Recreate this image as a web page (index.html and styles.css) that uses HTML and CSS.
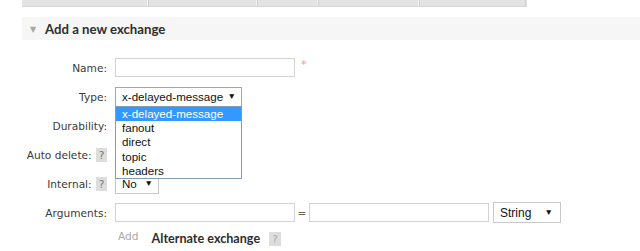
FILE: index.html
```html
<!DOCTYPE html>
<html lang="en">
<head>
  <meta charset="UTF-8" />
  <title>Add a new exchange</title>
  <link rel="stylesheet" href="styles.css">
</head>
<body>
  <div class="page">
    <div class="tabs">
      <div class="tab t1"></div>
      <div class="tab t2"></div>
      <div class="tab t3"></div>
      <div class="tab t4"></div>
      <div class="tab t5"></div>
    </div>

    <div class="section-head">
      <span class="arrow">&#9660;</span>
      <h2>Add a new exchange</h2>
    </div>

    <div class="form">
      <div class="row">
        <div class="label">Name:</div>
        <div class="input wide"></div>
        <span class="mandatory">*</span>
      </div>

      <div class="row">
        <div class="label">Type:</div>
        <div class="select type focus">
          <span>x-delayed-message</span><span class="caret">&#9660;</span>
          <ul class="options">
            <li class="selected">x-delayed-message</li>
            <li>fanout</li>
            <li>direct</li>
            <li>topic</li>
            <li>headers</li>
          </ul>
        </div>
      </div>

      <div class="row">
        <div class="label">Durability:</div>
      </div>

      <div class="row">
        <div class="label">Auto delete: <span class="help">?</span></div>
      </div>

      <div class="row">
        <div class="label">Internal: <span class="help">?</span></div>
        <div class="select small"><span>No</span><span class="caret">&#9660;</span></div>
      </div>

      <div class="row">
        <div class="label">Arguments:</div>
        <div class="input wide"></div>
        <span class="equals">=</span>
        <div class="input wide"></div>
        <div class="select kind"><span>String</span><span class="caret">&#9660;</span></div>
      </div>

      <div class="row last">
        <div class="label"></div>
        <span class="add">Add</span>
        <span class="alt">Alternate exchange</span>
        <span class="help big">?</span>
      </div>
    </div>
  </div>
</body>
</html>
```

FILE: styles.css
```css
* {
  box-sizing: border-box;
  margin: 0;
  padding: 0;
}

body {
  background: #fff;
  font-family: "DejaVu Sans", Verdana, sans-serif;
  font-size: 10.6px;
  color: #3a3a3a;
  overflow: hidden;
}

.tabs {
  display: flex;
  margin-left: 22px;
  width: 505px;
  height: 7px;
  background: #e3e3e3;
  border-bottom: 1px solid #d6d6d6;
}

.tab {
  height: 100%;
  border-right: 1px solid #f2f2f2;
  box-shadow: 1px 0 0 #d0d0d0;
}

.t1 { width: 126px; }
.t2 { width: 109px; }
.t3 { width: 61px; }
.t4 { width: 101px; }
.t5 { width: 107px; border-right: 1px solid #cfcfcf; box-shadow: none; }

.section-head {
  display: flex;
  align-items: center;
  margin: 10px 0 0 22px;
  height: 23px;
  background: #f6f6f6;
}

.arrow {
  font-size: 8px;
  color: #a8a8a8;
  margin: 1px 0 0 8px;
  width: 15px;
}

h2 {
  font-family: Lato, sans-serif;
  font-weight: bold;
  font-size: 13.2px;
  color: #2e2e2e;
}

.form {
  margin-top: 13px;
}

.row {
  display: flex;
  align-items: center;
  height: 29px;
}

.row.last {
  height: 22px;
}

.label {
  width: 108px;
  text-align: right;
  padding-right: 1px;
  margin-right: 7px;
  white-space: nowrap;
}

.help {
  display: inline-block;
  width: 11px;
  height: 14px;
  line-height: 14px;
  margin-left: 1px;
  background: #ddd;
  color: #777;
  text-align: center;
  font-size: 10.5px;
}

.help.big {
  width: 12px;
  margin-left: 9px;
  margin-top: 2px;
  color: #aaa;
}

.input {
  height: 19px;
  border: 1px solid #d3d3d3;
  background: #fff;
}

.input.wide {
  width: 180px;
}

.mandatory {
  color: #e99;
  font-size: 11px;
  margin: -6px 0 0 6px;
}

.equals {
  width: 14px;
  text-align: center;
  color: #666;
}

.select {
  position: relative;
  display: flex;
  align-items: center;
  justify-content: space-between;
  height: 20px;
  padding: 0 5px 0 6px;
  border: 1px solid #c8c8c8;
  background: #fff;
  font-family: "Liberation Sans", Arial, sans-serif;
  font-size: 11.6px;
  color: #111;
}

.select.focus {
  border-color: #8ea9d8;
}

.caret {
  font-size: 8.5px;
  color: #111;
  margin-top: -2px;
}

.select.type {
  width: 127px;
}

.select.small {
  width: 44px;
  padding-right: 5px;
}

.select.kind {
  width: 68px;
  height: 21px;
  margin-left: 4px;
  padding-right: 7px;
  font-size: 12px;
}

.options {
  position: absolute;
  left: -1px;
  top: 18px;
  width: 127px;
  list-style: none;
  background: #fff;
  border: 1px solid #7f9db9;
  z-index: 2;
}

.options li {
  height: 14.4px;
  line-height: 14.4px;
  padding-left: 6px;
}

.options li.selected {
  background: #3399ff;
  color: #fff;
}

.add {
  color: #aaa;
  margin-left: 3px;
  margin-top: -5px;
}

.alt {
  font-family: Lato, sans-serif;
  font-weight: bold;
  font-size: 12.6px;
  color: #2e2e2e;
  margin-left: 13px;
}
```
